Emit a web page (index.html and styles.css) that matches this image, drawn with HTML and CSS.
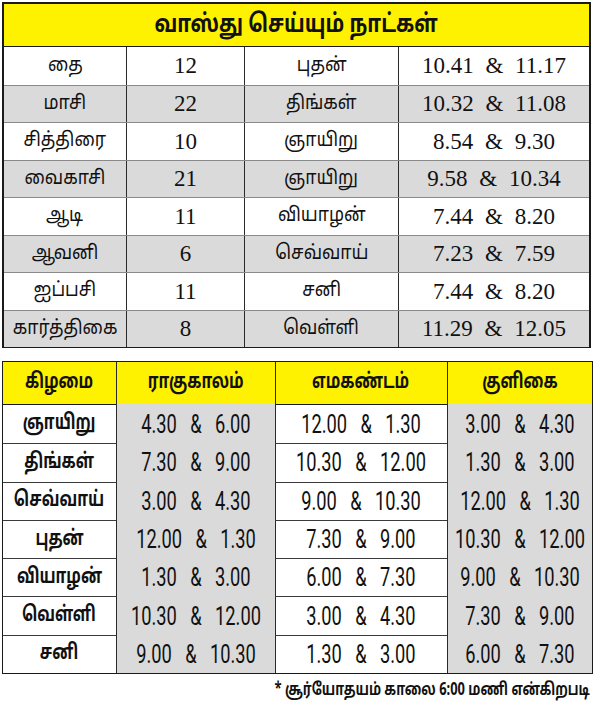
FILE: index.html
```html
<!DOCTYPE html>
<html lang="ta">
<head>
<meta charset="utf-8">
<title>வாஸ்து செய்யும் நாட்கள்</title>
<link rel="stylesheet" href="styles.css">
</head>
<body>
<div class="page">
  <section class="vastu">
    <div class="title"><span class="sq-title">வாஸ்து செய்யும் நாட்கள்</span></div>
    <div class="vrow"><div class="cell ta"><span class="tq">தை</span></div><div class="cell num">12</div><div class="cell ta"><span class="tq">புதன்</span></div><div class="cell num">10.41 &amp; 11.17</div></div>
    <div class="vrow alt"><div class="cell ta"><span class="tq">மாசி</span></div><div class="cell num">22</div><div class="cell ta"><span class="tq">திங்கள்</span></div><div class="cell num">10.32 &amp; 11.08</div></div>
    <div class="vrow"><div class="cell ta"><span class="tq">சித்திரை</span></div><div class="cell num">10</div><div class="cell ta"><span class="tq">ஞாயிறு</span></div><div class="cell num">8.54 &amp; 9.30</div></div>
    <div class="vrow alt"><div class="cell ta"><span class="tq">வைகாசி</span></div><div class="cell num">21</div><div class="cell ta"><span class="tq">ஞாயிறு</span></div><div class="cell num">9.58 &amp; 10.34</div></div>
    <div class="vrow"><div class="cell ta"><span class="tq">ஆடி</span></div><div class="cell num">11</div><div class="cell ta"><span class="tq">வியாழன்</span></div><div class="cell num">7.44 &amp; 8.20</div></div>
    <div class="vrow alt"><div class="cell ta"><span class="tq">ஆவனி</span></div><div class="cell num">6</div><div class="cell ta"><span class="tq">செவ்வாய்</span></div><div class="cell num">7.23 &amp; 7.59</div></div>
    <div class="vrow"><div class="cell ta"><span class="tq">ஐப்பசி</span></div><div class="cell num">11</div><div class="cell ta"><span class="tq">சனி</span></div><div class="cell num">7.44 &amp; 8.20</div></div>
    <div class="vrow alt"><div class="cell ta"><span class="tq">கார்த்திகை</span></div><div class="cell num">8</div><div class="cell ta"><span class="tq">வெள்ளி</span></div><div class="cell num">11.29 &amp; 12.05</div></div>
  </section>

  <section class="kalam">
    <div class="krow head">
      <div class="kcell"><span class="sq">கிழமை</span></div>
      <div class="kcell"><span class="sq">ராகுகாலம்</span></div>
      <div class="kcell"><span class="sq">எமகண்டம்</span></div>
      <div class="kcell"><span class="sq">குளிகை</span></div>
    </div>
    <div class="krow"><div class="kcell day"><span class="sq">ஞாயிறு</span></div><div class="kcell g"><span class="sq">4.30  &amp;  6.00</span></div><div class="kcell"><span class="sq">12.00  &amp;  1.30</span></div><div class="kcell g"><span class="sq">3.00  &amp;  4.30</span></div></div>
    <div class="krow"><div class="kcell day"><span class="sq">திங்கள்</span></div><div class="kcell g"><span class="sq">7.30  &amp;  9.00</span></div><div class="kcell"><span class="sq">10.30  &amp;  12.00</span></div><div class="kcell g"><span class="sq">1.30  &amp;  3.00</span></div></div>
    <div class="krow"><div class="kcell day"><span class="sq">செவ்வாய்</span></div><div class="kcell g"><span class="sq">3.00  &amp;  4.30</span></div><div class="kcell"><span class="sq">9.00  &amp;  10.30</span></div><div class="kcell g"><span class="sq">12.00  &amp;  1.30</span></div></div>
    <div class="krow"><div class="kcell day"><span class="sq">புதன்</span></div><div class="kcell g"><span class="sq">12.00  &amp;  1.30</span></div><div class="kcell"><span class="sq">7.30  &amp;  9.00</span></div><div class="kcell g"><span class="sq">10.30  &amp;  12.00</span></div></div>
    <div class="krow"><div class="kcell day"><span class="sq">வியாழன்</span></div><div class="kcell g"><span class="sq">1.30  &amp;  3.00</span></div><div class="kcell"><span class="sq">6.00  &amp;  7.30</span></div><div class="kcell g"><span class="sq">9.00  &amp;  10.30</span></div></div>
    <div class="krow"><div class="kcell day"><span class="sq">வெள்ளி</span></div><div class="kcell g"><span class="sq">10.30  &amp;  12.00</span></div><div class="kcell"><span class="sq">3.00  &amp;  4.30</span></div><div class="kcell g"><span class="sq">7.30  &amp;  9.00</span></div></div>
    <div class="krow"><div class="kcell day"><span class="sq">சனி</span></div><div class="kcell g"><span class="sq">9.00  &amp;  10.30</span></div><div class="kcell"><span class="sq">1.30  &amp;  3.00</span></div><div class="kcell g"><span class="sq">6.00  &amp;  7.30</span></div></div>
  </section>

  <div class="note"><span class="sq-note">* சூர்யோதயம் காலை 6:00 மணி என்கிறபடி</span></div>
</div>
</body>
</html>
```

FILE: styles.css
```css
html, body {
  margin: 0;
  padding: 0;
  background: #ffffff;
  color: #111111;
}

.page {
  width: 600px;
  padding: 2px 0 0 2px;
  box-sizing: border-box;
  font-family: "Noto Sans Tamil", "Noto Sans", "Liberation Sans", sans-serif;
}

/* ---------- top table ---------- */
.vastu {
  width: 589px;
  box-sizing: border-box;
  border: 2px solid #1a1a1a;
  border-bottom-width: 1.5px;
}

.vastu .title {
  height: 42px;
  background: #fff200;
  border-bottom: 1.5px solid #1a1a1a;
  display: flex;
  align-items: center;
  justify-content: center;
}

.sq-title {
  display: inline-block;
  font-size: 25px;
  font-weight: 700;
  transform: scaleX(0.8);
  white-space: nowrap;
}

.vrow {
  display: grid;
  grid-template-columns: 122px 118px 154px minmax(0, 1fr);
  height: 37.5px;
  box-sizing: border-box;
  border-top: 1px solid #8a8a8a;
}

.vrow:nth-child(2) {
  border-top: none;
}

.vrow.alt {
  background: #dadada;
}

.vrow .cell {
  display: flex;
  align-items: center;
  justify-content: center;
  white-space: nowrap;
  min-width: 0;
}

.vrow .cell + .cell {
  border-left: 1px solid #2a2a2a;
}

.vrow .ta {
  font-size: 19.5px;
}

.tq {
  display: inline-block;
  flex: none;
  transform: scaleX(0.9);
}

.vrow .num {
  font-family: "Liberation Serif", serif;
  font-size: 23px;
  word-spacing: 6px;
  padding-top: 1px;
}

/* ---------- bottom table ---------- */
.kalam {
  width: 591px;
  margin-top: 13px;
  box-sizing: border-box;
  border: 1.5px solid #1a1a1a;
}

.krow {
  display: grid;
  grid-template-columns: 112.5px 159px 172px minmax(0, 1fr);
  height: 38.3px;
  box-sizing: border-box;
  border-top: 1px solid #3a3a3a;
}

.krow.head {
  height: 43px;
  border-top: none;
  background: #fff200;
  border-bottom: 1px solid #1a1a1a;
}

.krow.head + .krow {
  border-top: none;
}

.kcell {
  display: flex;
  align-items: center;
  justify-content: center;
  white-space: pre;
  min-width: 0;
  font-family: "Roboto", "Liberation Sans", sans-serif;
  font-size: 25px;
}

.kcell + .kcell {
  border-left: 1px solid #2a2a2a;
}

.kcell.g {
  background: #dadada;
  margin-top: -1px;
  padding-top: 1px;
}

.krow.head .kcell {
  font-family: "Noto Sans Tamil", "Noto Sans", sans-serif;
  font-size: 21px;
  font-weight: 700;
}

.kcell.day {
  font-family: "Noto Sans Tamil", "Noto Sans", sans-serif;
  font-size: 21px;
  font-weight: 700;
}

.sq {
  display: inline-block;
  flex: none;
  transform: scaleX(0.73);
  word-spacing: 3px;
}

.krow.head .sq,
.kcell.day .sq {
  transform: scaleX(0.74);
  word-spacing: 0;
}

.note {
  margin-top: 6px;
  width: 588px;
  display: flex;
  justify-content: flex-end;
}

.sq-note {
  display: inline-block;
  font-size: 17px;
  font-weight: 700;
  white-space: nowrap;
  transform: scaleX(0.76);
  transform-origin: right center;
}
```
